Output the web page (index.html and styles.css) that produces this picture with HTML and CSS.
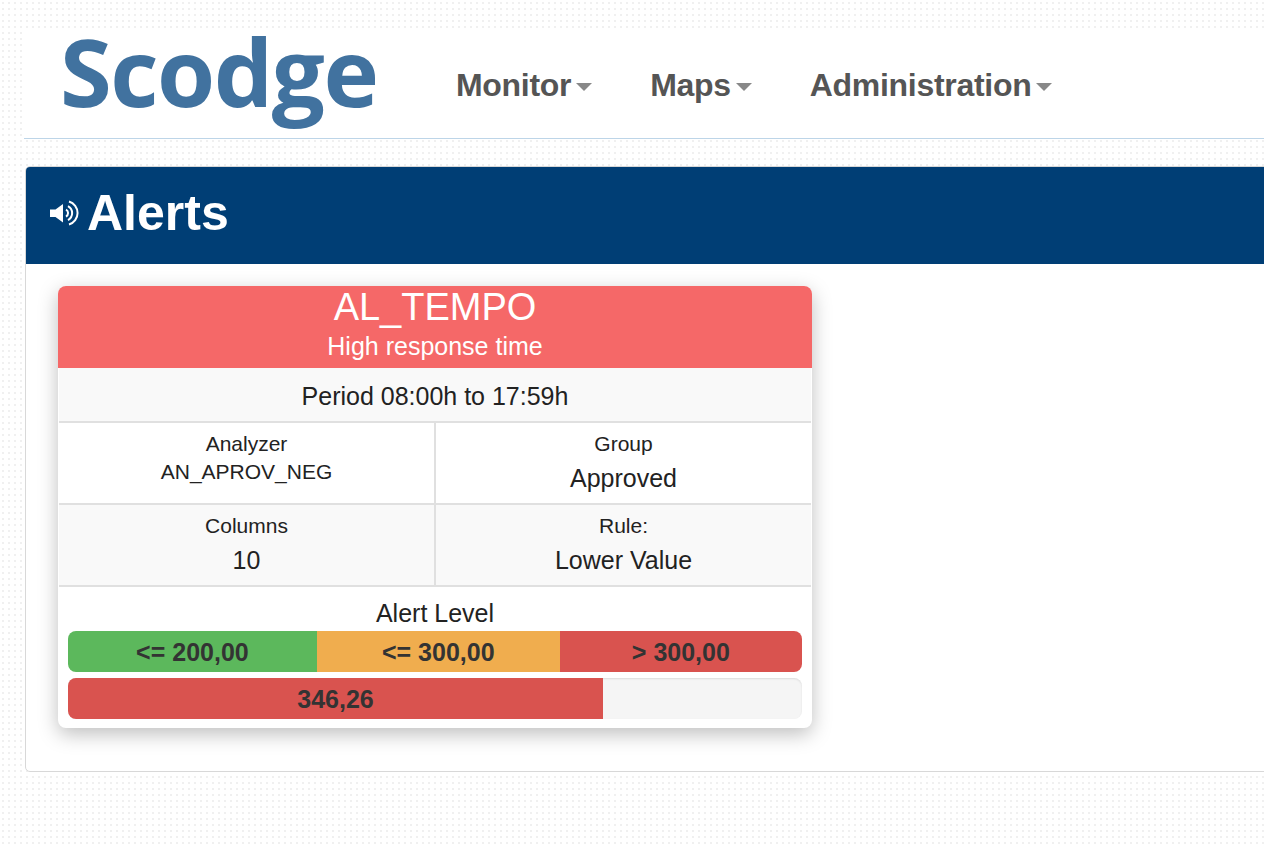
FILE: index.html
```html
<!DOCTYPE html>
<html>
<head>
    <title>Scodge - Alerts</title>
    <link rel="stylesheet" href="styles.css">
</head>
<body>
    <div class="header">
        <div class="logo">Scodge</div>
        <div class="nav">
            <a class="nav-item">Monitor<span class="caret"></span></a>
            <a class="nav-item">Maps<span class="caret"></span></a>
            <a class="nav-item">Administration<span class="caret"></span></a>
        </div>
    </div>

    <div class="panel">
        <div class="panel-heading">
            <svg class="icon-volume" width="30" height="26" viewBox="0 0 30 26">
                <path d="M1 9.500h5.500L14 4v18.500L6.500 17H1z" fill="#fff"></path>
                <path d="M17 9.500a4 4 0 0 1 0 7" fill="none" stroke="#fff" stroke-width="2"></path>
                <path d="M19 6a8 8 0 0 1 0 14" fill="none" stroke="#fff" stroke-width="2"></path>
                <path d="M20 1.500a12 12 0 0 1 0 23" fill="none" stroke="#fff" stroke-width="2"></path>
            </svg>
            <span class="panel-title">Alerts</span>
        </div>
        <div class="panel-body">
            <div class="card">
                <div class="card-head">
                    <div class="card-name">AL_TEMPO</div>
                    <div class="card-desc">High response time</div>
                </div>
                <div class="period">Period 08:00h to 17:59h</div>
                <div class="info-row">
                    <div class="cell">
                        <div class="cell-label">Analyzer</div>
                        <div class="cell-label">AN_APROV_NEG</div>
                    </div>
                    <div class="cell">
                        <div class="cell-label">Group</div>
                        <div class="cell-value">Approved</div>
                    </div>
                </div>
                <div class="info-row alt">
                    <div class="cell">
                        <div class="cell-label">Columns</div>
                        <div class="cell-value">10</div>
                    </div>
                    <div class="cell">
                        <div class="cell-label">Rule:</div>
                        <div class="cell-value">Lower Value</div>
                    </div>
                </div>
                <div class="levels">
                    <div class="levels-title">Alert Level</div>
                    <div class="bar">
                        <div class="seg green" style="width:33.9%">&lt;= 200,00</div>
                        <div class="seg orange" style="width:33.1%">&lt;= 300,00</div>
                        <div class="seg red" style="width:33%">&gt; 300,00</div>
                    </div>
                    <div class="bar track">
                        <div class="seg red" style="width:72.9%">346,26</div>
                    </div>
                </div>
            </div>
        </div>
    </div>
</body>
</html>
```

FILE: styles.css
```css
*{
    box-sizing: border-box;
}
html,body{
    height:100%;
}
body{
    margin:0;
    padding-top:32px;
    padding-left:24px;
    overflow:hidden;
    font-family:"Liberation Sans",Arial,sans-serif;
    color:#222;
    background-color:#fff;
    background-image:radial-gradient(circle,#f0f0f0 1px,transparent 1.3px);
    background-size:6px 6px;
}
.header{
    height:107px;
    background-color:#fff;
    border-bottom:1px solid #bdd5e8;
    display:flex;
    align-items:flex-start;
}
.logo{
    width:432px;
    padding-left:36px;
    margin-top:-21px;
    font-family:"Open Sans",sans-serif;
    font-weight:700;
    font-size:94px;
    line-height:120px;
    letter-spacing:-1.5px;
    color:#41729f;
}
.nav{
    display:flex;
    gap:58px;
    padding-top:33px;
}
.nav-item{
    font-size:32px;
    line-height:40px;
    font-weight:bold;
    letter-spacing:-0.3px;
    color:#555;
    display:flex;
    align-items:center;
}
.caret{
    width:0;
    height:0;
    margin-left:5px;
    margin-top:4px;
    border-left:8px solid transparent;
    border-right:8px solid transparent;
    border-top:8px solid #888;
}
.panel{
    margin-top:27px;
    margin-left:1px;
    margin-right:-10px;
    background-color:#fff;
    border:1px solid #d8d8d8;
    border-radius:5px;
}
.panel-heading{
    height:97px;
    background-color:#003e75;
    border-radius:4px 4px 0 0;
    display:flex;
    align-items:center;
    padding-left:23px;
    padding-bottom:5px;
    color:#fff;
}
.icon-volume{
    margin-right:8px;
}
.panel-title{
    font-size:50px;
    font-weight:bold;
}
.panel-body{
    padding:22px 32px 43px;
}
.card{
    width:754px;
    background-color:#fff;
    border-radius:8px;
    box-shadow:0 6px 20px rgba(0,0,0,.26);
}
.card-head{
    height:82px;
    background-color:#f56868;
    border-radius:8px 8px 0 0;
    color:#fff;
    text-align:center;
}
.card-name{
    font-size:38px;
    line-height:42px;
}
.card-desc{
    font-size:25px;
    line-height:36px;
}
.period{
    height:55px;
    margin:0 1px;
    background-color:#f9f9f9;
    border-bottom:2px solid #e0e0e0;
    font-size:25px;
    line-height:56px;
    text-align:center;
}
.info-row{
    display:grid;
    grid-template-columns:377px 375px;
    height:82px;
    margin:0 1px;
    border-bottom:2px solid #e0e0e0;
}
.info-row.alt{
    background-color:#f9f9f9;
}
.cell{
    padding-top:7px;
    text-align:center;
}
.cell:first-child{
    border-right:2px solid #e0e0e0;
}
.cell-label{
    font-size:21px;
    line-height:28px;
}
.cell-value{
    font-size:25px;
    line-height:40px;
}
.levels{
    padding:11px 10px 9px;
}
.levels-title{
    font-size:25px;
    line-height:30px;
    text-align:center;
    margin-bottom:3px;
}
.bar{
    display:flex;
    height:41px;
    border-radius:8px;
    overflow:hidden;
    margin-bottom:6px;
}
.bar:last-child{
    margin-bottom:0;
}
.bar.track{
    background-color:#f5f5f5;
    box-shadow:inset 0 1px 2px rgba(0,0,0,.1);
}
.seg{
    font-size:25px;
    font-weight:bold;
    line-height:42px;
    text-align:center;
    color:#333;
}
.green{
    background-color:#5cb85c;
}
.orange{
    background-color:#f0ad4e;
}
.red{
    background-color:#d9534f;
}
```
